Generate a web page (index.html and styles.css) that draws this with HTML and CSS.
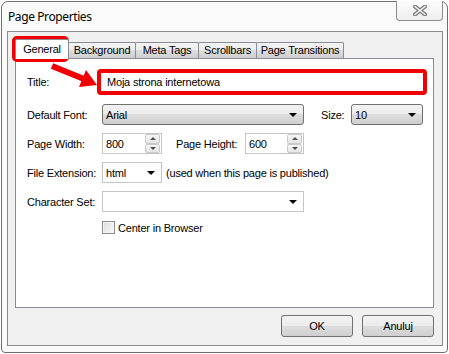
FILE: index.html
```html
<!DOCTYPE html>
<html lang="pl">
<head>
    <meta charset="UTF-8">
    <title>Page Properties</title>
    <link rel="stylesheet" href="styles.css">
</head>
<body>

<div class="window">
    <div class="titlebar">
        <span class="title">Page Properties</span>
        <div class="close">
            <svg width="14" height="11" viewBox="0 0 14 11">
                <path d="M2 1.5 L12 9.5 M12 1.5 L2 9.5" stroke="#7a7a7a" stroke-width="4" stroke-linecap="square"/>
                <path d="M2 1.5 L12 9.5 M12 1.5 L2 9.5" stroke="#f4f4f4" stroke-width="1.6" stroke-linecap="square"/>
            </svg>
        </div>
    </div>

    <div class="client">
        <div class="tabs">
            <div class="tab selected tab-general">General</div>
            <div class="tab tab-background">Background</div>
            <div class="tab tab-meta">Meta Tags</div>
            <div class="tab tab-scroll">Scrollbars</div>
            <div class="tab tab-trans">Page Transitions</div>
        </div>

        <div class="panel">
            <div class="row row-title">
                <span class="lbl lbl-title">Title:</span>
                <div class="textbox highlight">Moja strona internetowa</div>
            </div>
            <div class="row">
                <span class="lbl">Default Font:</span>
                <div class="combo combo-btn combo-font">Arial<span class="arrow"></span></div>
                <span class="lbl lbl-size">Size:</span>
                <div class="combo combo-btn combo-size">10<span class="arrow"></span></div>
            </div>
            <div class="row">
                <span class="lbl">Page Width:</span>
                <div class="spin">
                    <span class="spin-value">800</span>
                    <div class="spin-btns">
                        <span class="spin-up"><span class="tri-up"></span></span>
                        <span class="spin-down"><span class="tri-down"></span></span>
                    </div>
                </div>
                <span class="lbl lbl-height">Page Height:</span>
                <div class="spin spin-h">
                    <span class="spin-value">600</span>
                    <div class="spin-btns">
                        <span class="spin-up"><span class="tri-up"></span></span>
                        <span class="spin-down"><span class="tri-down"></span></span>
                    </div>
                </div>
            </div>
            <div class="row">
                <span class="lbl">File Extension:</span>
                <div class="combo combo-edit combo-ext">html<span class="arrow"></span></div>
                <span class="note">(used when this page is published)</span>
            </div>
            <div class="row">
                <span class="lbl">Character Set:</span>
                <div class="combo combo-edit combo-charset"><span class="arrow"></span></div>
            </div>
            <div class="row row-check">
                <span class="checkbox"></span>
                <span class="check-label">Center in Browser</span>
            </div>
        </div>

        <div class="buttons">
            <button class="btn">OK</button>
            <button class="btn">Anuluj</button>
        </div>
    </div>
</div>

<!-- czerwone oznaczenia na zrzucie -->
<svg class="annotations" width="449" height="354" viewBox="0 0 449 354">
    <rect x="14" y="38" width="53" height="22" rx="3" fill="none" stroke="#f00000" stroke-width="4"/>
    <path d="M52 66 L84 79" stroke="#f00000" stroke-width="6"/>
    <polygon points="97,85 79,87 86,70" fill="#f00000"/>
</svg>

</body>
</html>
```

FILE: styles.css
```css
body {
    margin: 0;
    background: #ffffff;
    font-family: "Liberation Sans", Arial, sans-serif;
    font-size: 11px;
    letter-spacing: -0.2px;
    color: #000;
    width: 449px;
    height: 354px;
    overflow: hidden;
}
.window {
    box-sizing: border-box;
    margin: 1px;
    width: 447px;
    height: 352px;
    border: 1px solid #6e6e6e;
    border-radius: 7px 7px 4px 4px;
    background: #fafafa;
    padding: 0 4px 6px 5px;
    display: flex;
    flex-direction: column;
}
.titlebar {
    height: 29px;
    display: flex;
    align-items: flex-start;
    justify-content: space-between;
}
.title {
    font-family: "Noto Sans", sans-serif;
    font-size: 12px;
    letter-spacing: -0.4px;
    margin: 6px 0 0 1px;
    color: #000;
}
.close {
    box-sizing: border-box;
    width: 47px;
    height: 20px;
    margin-top: -1px;
    border: 1px solid #8d8d8d;
    border-top: none;
    border-radius: 0 0 4px 4px;
    background: linear-gradient(#fdfdfd, #eeeeee);
    display: flex;
    align-items: center;
    justify-content: center;
}
.client {
    box-sizing: border-box;
    flex: 1;
    border: 1px solid #8a8a8a;
    background: #f0f0f0;
    padding: 7px 8px 7px 7px;
    display: flex;
    flex-direction: column;
}
.tabs {
    display: flex;
    align-items: flex-end;
    height: 20px;
    margin-bottom: -1px;
    position: relative;
    z-index: 1;
}
.tab {
    box-sizing: border-box;
    height: 16px;
    margin-bottom: 1px;
    margin-left: -1px;
    border: 1px solid #898c95;
    border-bottom: none;
    border-radius: 2px 2px 0 0;
    background: linear-gradient(#f3f3f3, #ebebeb 50%, #dddddd 50%, #cfcfcf);
    display: flex;
    align-items: center;
    justify-content: center;
    padding-bottom: 1px;
}
.tab.selected {
    height: 20px;
    margin-bottom: 0;
    margin-left: 0;
    background: #ffffff;
    padding-bottom: 2px;
}
.tab-general { width: 54px; }
.tab-background { width: 68px; }
.tab-meta { width: 64px; }
.tab-scroll { width: 59px; }
.tab-trans { width: 88px; }

.panel {
    box-sizing: border-box;
    height: 250px;
    border: 1px solid #898c95;
    background: #ffffff;
    padding: 10px 0 0 11px;
}
.row {
    display: flex;
    align-items: center;
    height: 21px;
    margin-bottom: 8px;
}
.row-title {
    height: 26px;
    margin-bottom: 9px;
}
.row-check {
    height: 15px;
    margin-top: 2px;
    padding-left: 75px;
}
.lbl {
    width: 75px;
    flex-shrink: 0;
}
.lbl-title {
    width: 70px;
}
.lbl-size {
    width: 30px;
    margin-left: 17px;
}
.lbl-height {
    width: 69px;
    margin-left: 14px;
}
.textbox {
    box-sizing: border-box;
    width: 330px;
    height: 26px;
    background: #fff;
    display: flex;
    align-items: center;
    padding-left: 6px;
}
.highlight {
    border: 4px solid #f00000;
    border-radius: 4px;
}
.combo {
    box-sizing: border-box;
    height: 21px;
    display: flex;
    align-items: center;
    padding-left: 3px;
    position: relative;
}
.combo-btn {
    border: 1px solid #707070;
    border-radius: 3px;
    background: linear-gradient(#f3f3f3, #ebebeb 50%, #dddddd 50%, #cfcfcf);
}
.combo-edit {
    border: 1px solid #c5c5c5;
    background: #ffffff;
}
.combo-font { width: 202px; }
.combo-size { width: 72px; }
.combo-ext { width: 60px; }
.combo-charset { width: 202px; }
.arrow {
    margin-left: auto;
    margin-right: 6px;
    width: 0;
    height: 0;
    border-left: 4px solid transparent;
    border-right: 4px solid transparent;
    border-top: 4px solid #000;
}
.note {
    margin-left: 4px;
}
.spin {
    box-sizing: border-box;
    width: 60px;
    height: 21px;
    border: 1px solid #c5c5c5;
    background: #fff;
    display: flex;
    align-items: center;
    padding-left: 3px;
}
.spin-h {
    width: 59px;
}
.spin-btns {
    margin-left: auto;
    margin-right: 1px;
    width: 15px;
    height: 19px;
    display: flex;
    flex-direction: column;
}
.spin-up, .spin-down {
    box-sizing: border-box;
    flex: 1;
    border: 1px solid #c9c9c9;
    border-radius: 2px;
    background: linear-gradient(#f7f7f7, #e4e4e4);
    display: flex;
    align-items: center;
    justify-content: center;
}
.tri-up, .tri-down {
    width: 0;
    height: 0;
    border-left: 3px solid transparent;
    border-right: 3px solid transparent;
}
.tri-up { border-bottom: 3px solid #4d4d4d; }
.tri-down { border-top: 3px solid #4d4d4d; }

.checkbox {
    box-sizing: border-box;
    width: 13px;
    height: 13px;
    border: 1px solid #8e8f8f;
    background: linear-gradient(135deg, #dcdcdc, #fbfbfb);
    box-shadow: inset 0 0 0 1px #f4f4f4;
}
.check-label {
    margin-left: 3px;
}
.buttons {
    display: flex;
    justify-content: flex-end;
    gap: 9px;
    margin-top: 7px;
}
.btn {
    box-sizing: border-box;
    width: 72px;
    height: 22px;
    border: 1px solid #707070;
    border-radius: 3px;
    background: linear-gradient(#f3f3f3, #ebebeb 50%, #dddddd 50%, #cfcfcf);
    font-family: "Liberation Sans", Arial, sans-serif;
    font-size: 11px;
    letter-spacing: -0.2px;
    color: #000;
    padding: 0;
}
.annotations {
    position: absolute;
    left: 0;
    top: 0;
    pointer-events: none;
}
```
